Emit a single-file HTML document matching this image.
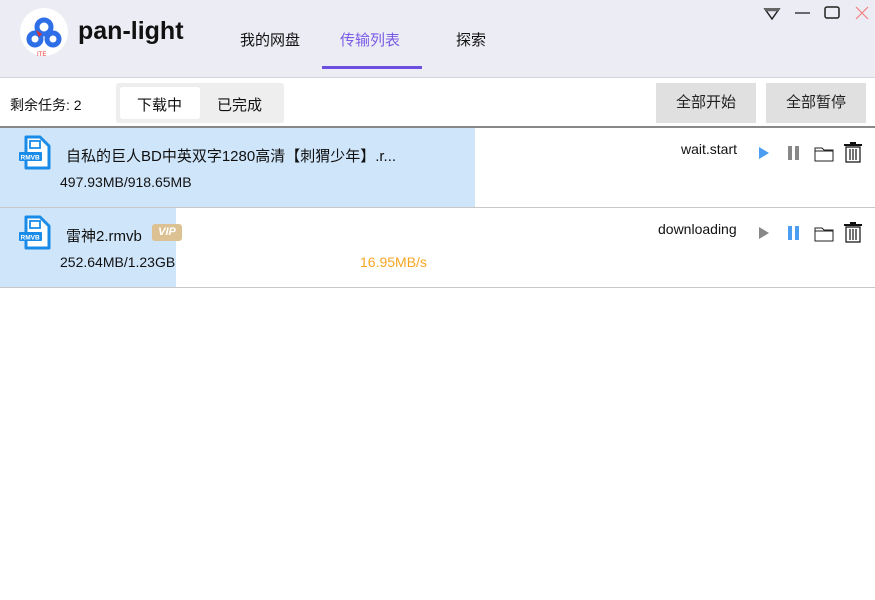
<html><head><style>
body{margin:0;width:875px;height:600px;background:#fff;font-family:"Liberation Sans","Noto Sans CJK SC",sans-serif;position:relative;overflow:hidden;color:#111}
.a{position:absolute}
.hdr{left:0;top:0;width:875px;height:77px;background:#ececf4;border-bottom:1px solid #d4d4dc}
.tab{font-size:15px;top:29px}
.btn{background:#e0e0e0;font-size:15px;text-align:center;line-height:40px;height:40px;top:83px;width:100px;color:#222}
.row{left:0;width:875px;height:79px;border-bottom:1px solid #c8c8c8}
.t{font-size:15px}
</style></head><body>
<div class="a hdr"></div>
<div class="a" style="left:20px;top:8px;width:48px;height:48px;border-radius:50%;background:#fff"></div>
<svg class="a" style="left:20px;top:8px" width="48" height="48" viewBox="0 0 48 48"><circle cx="24" cy="19" r="7" fill="none" stroke="#2e6ee6" stroke-width="5"/><circle cx="15" cy="31" r="6" fill="none" stroke="#2e6ee6" stroke-width="5"/><circle cx="33" cy="31" r="6" fill="none" stroke="#2e6ee6" stroke-width="5"/><path d="M16 22l6 4-3 3z" fill="#d33"/><text x="17" y="48" font-size="6" fill="#e33" font-family="Liberation Sans">ITE</text></svg>
<div class="a" style="left:78px;top:17px;font-size:25px;font-weight:bold;color:#111">pan-light</div>
<div class="a tab" style="left:240px">我的网盘</div>
<div class="a tab" style="left:340px;color:#7b5ce6">传输列表</div>
<div class="a" style="left:322px;top:66px;width:100px;height:3px;background:#6c4fe0"></div>
<div class="a tab" style="left:456px">探索</div>
<svg class="a" style="left:760px;top:4px" width="110" height="20"><path d="M5 5h14l-7 10z" fill="none" stroke="#222" stroke-width="1.5"/><path d="M5 6h14" stroke="#666" stroke-width="2.5"/><path d="M35 9h15" stroke="#222" stroke-width="1.3"/><rect x="65" y="3" width="14" height="11" rx="2" fill="none" stroke="#222" stroke-width="1.5"/><path d="M96 3l12 12M108 3l-12 12" stroke="#f08080" stroke-width="1.2"/></svg>
<div class="a t" style="left:10px;top:95px;font-size:14px">剩余任务: 2</div>
<div class="a" style="left:116px;top:83px;width:168px;height:40px;background:#eeeeee;border-radius:3px"></div>
<div class="a" style="left:120px;top:87px;width:80px;height:32px;background:#fff;border-radius:3px"></div>
<div class="a t" style="left:137px;top:94px">下载中</div>
<div class="a t" style="left:217px;top:94px">已完成</div>
<div class="a btn" style="left:656px">全部开始</div>
<div class="a btn" style="left:766px">全部暂停</div>
<div class="a" style="left:0;top:126px;width:875px;height:2px;background:#888"></div>

<div class="a row" style="top:128px"></div>
<div class="a" style="left:0;top:128px;width:475px;height:79px;background:#cfe5fa"></div>
<div class="a row" style="top:208px"></div>
<div class="a" style="left:0;top:208px;width:176px;height:79px;background:#cfe5fa"></div>

<svg class="a" style="left:18px;top:134px" width="36" height="38"><path d="M8 3h14l9 9v22H8z" fill="#fff" stroke="#1a8ce8" stroke-width="3" stroke-linejoin="round"/><rect x="1" y="18" width="23" height="9" rx="1" fill="#1a8ce8"/><text x="2.5" y="25.5" font-size="6.5" font-weight="bold" fill="#fff" font-family="Liberation Sans">RMVB</text><rect x="12" y="7" width="10" height="7" fill="none" stroke="#1a8ce8" stroke-width="1.8"/></svg>
<svg class="a" style="left:18px;top:214px" width="36" height="38"><path d="M8 3h14l9 9v22H8z" fill="#fff" stroke="#1a8ce8" stroke-width="3" stroke-linejoin="round"/><rect x="1" y="18" width="23" height="9" rx="1" fill="#1a8ce8"/><text x="2.5" y="25.5" font-size="6.5" font-weight="bold" fill="#fff" font-family="Liberation Sans">RMVB</text><rect x="12" y="7" width="10" height="7" fill="none" stroke="#1a8ce8" stroke-width="1.8"/></svg>
<div class="a t" style="left:66px;top:145px">自私的巨人BD中英双字1280高清【刺猬少年】.r...</div>
<div class="a t" style="left:60px;top:174px;font-size:14px">497.93MB/918.65MB</div>
<div class="a t" style="left:66px;top:225px">雷神2.rmvb</div>
<div class="a" style="left:152px;top:224px;width:30px;height:17px;background:#dcc193;border-radius:3px;color:#fff;font-size:11px;font-weight:bold;text-align:center;line-height:17px;font-style:italic">VIP</div>
<div class="a t" style="left:60px;top:254px;font-size:14px">252.64MB/1.23GB</div>
<div class="a t" style="left:360px;top:254px;font-size:14px;color:#f5a623">16.95MB/s</div>
<div class="a t" style="left:681px;top:141px;font-size:14px">wait.start</div>
<div class="a t" style="left:658px;top:221px;font-size:14px">downloading</div>
<svg class="a" style="left:756px;top:142px" width="110" height="24"><path d="M3 5l10 6-10 6z" fill="#4a9df0"/><rect x="32" y="4" width="4" height="14" fill="#888"/><rect x="39" y="4" width="4" height="14" fill="#888"/><path d="M59 6h7l2 2h9v11H59z M59 9h18" fill="none" stroke="#222" stroke-width="1"/><path d="M88 3h18M94 1h6" stroke="#111" stroke-width="2"/><path d="M90 5h14v15H90zM94 7v11M97 7v11M100 7v11" fill="none" stroke="#111" stroke-width="1.2"/></svg>
<svg class="a" style="left:756px;top:222px" width="110" height="24"><path d="M3 5l10 6-10 6z" fill="#888"/><rect x="32" y="4" width="4" height="14" fill="#4a9df0"/><rect x="39" y="4" width="4" height="14" fill="#4a9df0"/><path d="M59 6h7l2 2h9v11H59z M59 9h18" fill="none" stroke="#222" stroke-width="1"/><path d="M88 3h18M94 1h6" stroke="#111" stroke-width="2"/><path d="M90 5h14v15H90zM94 7v11M97 7v11M100 7v11" fill="none" stroke="#111" stroke-width="1.2"/></svg>
</body></html>
